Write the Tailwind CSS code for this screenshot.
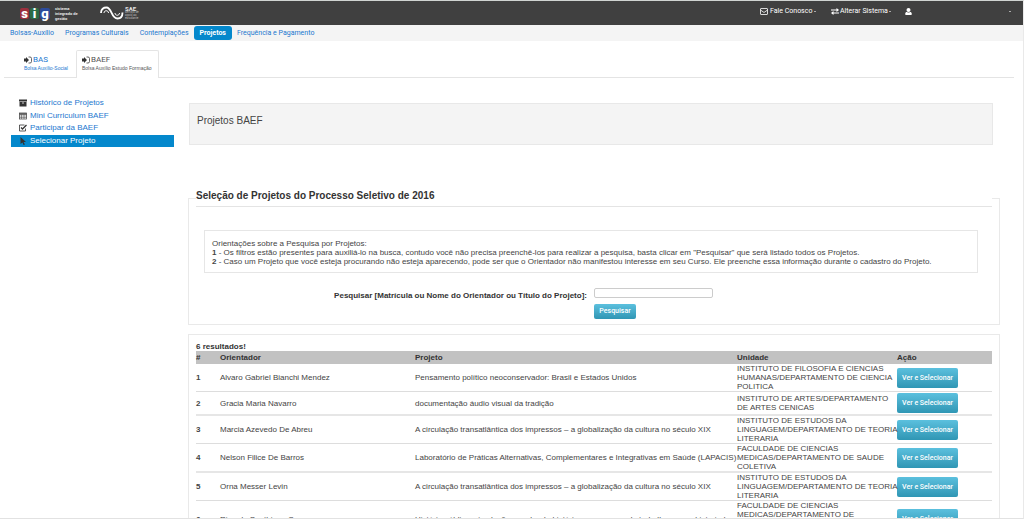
<!DOCTYPE html>
<html lang="pt-BR">
<head>
<meta charset="utf-8">
<title>SIG - Projetos BAEF</title>
<script src="https://cdn.jsdelivr.net/npm/@tailwindcss/browser@4"></script>
</head>
<body class="bg-white font-['Liberation_Sans',Arial,sans-serif] text-[8px] leading-[9px] text-[#444]">
<div class="h-screen overflow-hidden border-t border-r border-b border-t-[#d0d4d2] border-r-[#e9e9e9] border-b-[#e2e2e2]">

  <header class="flex h-6 items-center bg-[#404040] pr-3 pl-5 font-[Roboto,sans-serif] text-[7px] text-white">
    <a href="#" aria-label="SIG" class="flex items-center gap-1">
      <span class="flex gap-px text-[13px] leading-[11px] font-black">
        <span class="w-[9px] rounded-[2px] bg-[#9c2f3d] text-center">s</span>
        <span class="w-[9px] rounded-[2px] bg-[#2c6b45] text-center">i</span>
        <span class="w-[10px] rounded-[2px] bg-[#2c4b9b] text-center">g</span>
      </span>
      <span class="w-[46px] pl-px text-[4px] leading-[5px] font-bold text-[#e4e4e4]">sistema<br>integrado de<br>gestão</span>
    </a>
    <a href="#" aria-label="SAE" class="flex items-center">
      <svg class="h-[14px] w-6" viewBox="0 0 24 14" fill="none" stroke="#fff">
        <path d="M1 7C1 3 3.500 1.500 6.500 1.500C12 1.500 11 12.500 17.500 12.500C21 12.500 22.500 10 22.500 6.500" stroke-width="1.800"/>
        <path d="M4 7C4 4 8.500 4 8.500 7M15 7C15 10 19.500 10 19.500 7" stroke-width="1"/>
      </svg>
      <span class="pl-px text-[3px] leading-[3px] text-[#bbb]"><b class="block text-[6px] leading-[5px] text-[#e4e4e4]">SAE</b>serviço de<br>apoio ao<br>estudante</span>
    </a>
    <nav class="ml-auto flex items-center pb-1" aria-label="Usuário">
      <a href="#" class="flex w-[71px] items-center gap-[2px]">
        <svg class="h-[7px] w-2" viewBox="0 0 16 14" fill="none" stroke="#fff" stroke-width="1.600"><rect x="1" y="1" width="14" height="12" rx="1"/><path d="M1 4l7 5 7-5"/></svg>
        Fale Conosco<span class="h-px w-[2px] bg-[#aaa]"></span>
      </a>
      <a href="#" class="flex w-[74px] items-center gap-px">
        <svg class="h-[7px] w-2" viewBox="0 0 16 14" fill="#fff"><path d="M0 3h11V0l5 4-5 4V5H0zM16 9H5V6l-5 4 5 4v-3h11z"/></svg>
        Alterar Sistema<span class="h-px w-[2px] bg-[#aaa]"></span>
      </a>
      <a href="#" aria-label="Conta" class="flex w-[106px] items-center justify-between">
        <svg class="h-[7px] w-[7px]" viewBox="0 0 14 14" fill="#fff"><circle cx="7" cy="4" r="4"/><path d="M1 14c-2-5 2-7 3-6 2 1.500 4 1.500 6 0 1-1 5 1 3 6z"/></svg>
        <span class="h-px w-[2px] bg-[#aaa]"></span>
      </a>
    </nav>
  </header>

  <nav class="flex h-4 items-center gap-[11px] bg-[#f4f4f4] px-[10px] font-[Roboto,sans-serif] text-[7px] text-[#1c78cf]" aria-label="Principal">
    <a href="#">Bolsas-Auxílio</a>
    <a href="#">Programas Culturais</a>
    <a href="#">Contemplações</a>
    <a href="#" aria-current="page" class="-mx-[6px] rounded-[3px] bg-[#0488cc] px-[6px] py-[3px] leading-[8px] font-bold text-white">Projetos</a>
    <a href="#">Frequência e Pagamento</a>
  </nav>

  <div class="mr-[9px] ml-1 flex border-b border-[#e4e4e4] pt-[9px] pl-[14px] text-[5px] leading-[8px]">
    <a href="#" class="w-[58px] pt-[5px] pl-[6px] whitespace-nowrap text-[#1c78cf]">
      <span class="flex items-center gap-px font-[Roboto,sans-serif] text-[8px] leading-[9px]">
        <svg class="size-2" viewBox="0 0 16 16" fill="#333"><path d="M0 5h4V2l6 6-6 6v-3H0z"/><path d="M9 2h3q3 0 3 3v6q0 3-3 3H9" fill="none" stroke="#333" stroke-width="1.500"/></svg>
        BAS
      </span>
      Bolsa Auxílio-Social
    </a>
    <a href="#" aria-current="page" class="-mb-px w-[83px] rounded-t-[2px] border border-b-0 border-[#e4e4e4] bg-white pt-1 pb-[6px] pl-[5px] whitespace-nowrap text-[#555]">
      <span class="flex items-center gap-px font-[Roboto,sans-serif] text-[8px] leading-[9px]">
        <svg class="size-2" viewBox="0 0 16 16" fill="#333"><path d="M0 5h4V2l6 6-6 6v-3H0z"/><path d="M9 2h3q3 0 3 3v6q0 3-3 3H9" fill="none" stroke="#333" stroke-width="1.500"/></svg>
        BAEF
      </span>
      Bolsa Auxílio Estudo Formação
    </a>
  </div>

  <div class="flex pr-[23px] pl-[11px]">
    <aside class="w-[163px] shrink-0 pt-[19px]">
      <ul class="leading-[12px] text-[#1c78cf]">
        <li><a href="#" class="mb-px flex items-center gap-[3px] pl-2"><svg class="size-2" viewBox="0 0 16 16" fill="#333"><path d="M0 1h16v4H0zM1 6h14v9H1z"/><path d="M6 8h4" stroke="#fff" stroke-width="1.500"/></svg>Histórico de Projetos</a></li>
        <li><a href="#" class="flex items-center gap-[3px] pl-2"><svg class="size-2" viewBox="0 0 16 16" fill="none" stroke="#444" stroke-width="1.500"><rect x="1" y="2" width="14" height="12"/><path d="M1 4h14" stroke-width="3"/><path d="M1 8h14M1 11h14M5 5v9M10 5v9" stroke-width="1"/></svg>Mini Curriculum BAEF</a></li>
        <li><a href="#" class="mb-px flex items-center gap-[3px] pl-2"><svg class="size-2" viewBox="0 0 16 16" fill="none" stroke="#333"><path d="M13 9v5H1V2h10" stroke-width="1.600"/><path d="M4 7l3 3 8-8" stroke-width="2.500"/></svg>Participar da BAEF</a></li>
        <li><a href="#" aria-current="page" class="flex items-center gap-[3px] bg-[#0488cc] pl-2 text-white"><svg class="size-2" viewBox="0 0 16 16" fill="#333"><path d="M3 0l11 10H9l3 5-3 1-2-5-4 3z"/></svg>Selecionar Projeto</a></li>
      </ul>
    </aside>

    <main class="ml-[14px] min-w-0 flex-1 pt-[25px]">
      <h1 class="mr-[7px] ml-px h-[42px] border border-[#e8e8e8] bg-[#f4f4f4] px-[7px] pt-[11px] text-[10px] leading-[12px]">Projetos BAEF</h1>

      <form>
        <fieldset class="mt-[44px] border border-[#e9e9e9] px-[7px] pb-[5px]">
          <legend class="w-full border-b border-[#e4e4e4] pb-1 text-[10px] leading-[13px] font-bold text-[#333]">Seleção de Projetos do Processo Seletivo de 2016</legend>
          <div class="mr-[14px] ml-2 mt-[23px] border border-[#e6e6e6] px-[7px] pt-2 pb-[6px]">
            <p>Orientações sobre a Pesquisa por Projetos:</p>
            <p><b>1</b> - Os filtros estão presentes para auxiliá-lo na busca, contudo você não precisa preenchê-los para realizar a pesquisa, basta clicar em "Pesquisar" que será listado todos os Projetos.</p>
            <p><b>2</b> - Caso um Projeto que você esteja procurando não esteja aparecendo, pode ser que o Orientador não manifestou interesse em seu Curso. Ele preenche essa informação durante o cadastro do Projeto.</p>
          </div>
          <div class="mt-[15px] grid grid-cols-2 gap-x-[7px] gap-y-1 pr-[7px]">
            <label for="q" class="pt-[3px] text-right font-bold whitespace-nowrap text-[#333]">Pesquisar [Matrícula ou Nome do Orientador ou Título do Projeto]:</label>
            <input id="q" type="text" class="h-[10px] w-[119px] rounded-[2px] border border-[#ccc] px-1">
            <button type="submit" class="col-start-2 h-[15px] w-[42px] rounded-[2px] bg-linear-to-b from-[#5bc0de] to-[#2f96b4] font-[Roboto,sans-serif] text-[7px] font-medium text-white">Pesquisar</button>
          </div>
        </fieldset>
      </form>

      <section class="mt-[9px] border border-[#e9e9e9] px-[7px] pt-[7px]">
        <p class="font-bold text-[#333]">6 resultados!</p>
        <table class="w-full table-fixed border-separate border-spacing-0 text-left whitespace-nowrap [&_a]:block [&_a]:h-5 [&_a]:w-[61px] [&_a]:rounded-[2px] [&_a]:bg-linear-to-b [&_a]:from-[#5bc0de] [&_a]:to-[#2f96b4] [&_a]:text-center [&_a]:font-[Roboto,sans-serif] [&_a]:text-[7px] [&_a]:leading-5 [&_a]:font-medium [&_a]:text-white [&_td]:border-b [&_td]:border-[#ddd] [&_tr:nth-child(even)>td]:border-b-2 [&_tr:nth-child(even)>td]:border-[#e6e6e6]">
          <colgroup><col class="w-6"><col class="w-[195px]"><col class="w-[322px]"><col class="w-[160px]"><col></colgroup>
          <thead class="bg-[#c2c2c2] leading-[13px] text-[#333]">
            <tr><th>#</th><th>Orientador</th><th>Projeto</th><th>Unidade</th><th>Ação</th></tr>
          </thead>
          <tbody>
            <tr><td class="font-bold">1</td><td>Alvaro Gabriel Bianchi Mendez</td><td>Pensamento político neoconservador: Brasil e Estados Unidos</td><td>INSTITUTO DE FILOSOFIA E CIENCIAS<br>HUMANAS/DEPARTAMENTO DE CIENCIA<br>POLITICA</td><td class="py-px"><a href="#">Ver e Selecionar</a></td></tr>
            <tr><td class="font-bold">2</td><td>Gracia Maria Navarro</td><td>documentação áudio visual da tradição</td><td>INSTITUTO DE ARTES/DEPARTAMENTO<br>DE ARTES CENICAS</td><td class="py-px"><a href="#">Ver e Selecionar</a></td></tr>
            <tr><td class="font-bold">3</td><td>Marcia Azevedo De Abreu</td><td>A circulação transatlântica dos impressos – a globalização da cultura no século XIX</td><td>INSTITUTO DE ESTUDOS DA<br>LINGUAGEM/DEPARTAMENTO DE TEORIA<br>LITERARIA</td><td class="py-px"><a href="#">Ver e Selecionar</a></td></tr>
            <tr><td class="font-bold">4</td><td>Nelson Filice De Barros</td><td>Laboratório de Práticas Alternativas, Complementares e Integrativas em Saúde (LAPACIS)</td><td>FACULDADE DE CIENCIAS<br>MEDICAS/DEPARTAMENTO DE SAUDE<br>COLETIVA</td><td class="py-px"><a href="#">Ver e Selecionar</a></td></tr>
            <tr><td class="font-bold">5</td><td>Orna Messer Levin</td><td>A circulação transatlântica dos impressos – a globalização da cultura no século XIX</td><td>INSTITUTO DE ESTUDOS DA<br>LINGUAGEM/DEPARTAMENTO DE TEORIA<br>LITERARIA</td><td class="py-px"><a href="#">Ver e Selecionar</a></td></tr>
            <tr><td class="font-bold">6</td><td>Ricardo Santhiago Correa</td><td>História pública, circulação popular da história e os campos de trabalho para o historiador</td><td>FACULDADE DE CIENCIAS<br>MEDICAS/DEPARTAMENTO DE<br>SAUDE<br>COLETIVA</td><td class="py-px"><a href="#">Ver e Selecionar</a></td></tr>
          </tbody>
        </table>
      </section>
    </main>
  </div>
</div>
</body>
</html>
